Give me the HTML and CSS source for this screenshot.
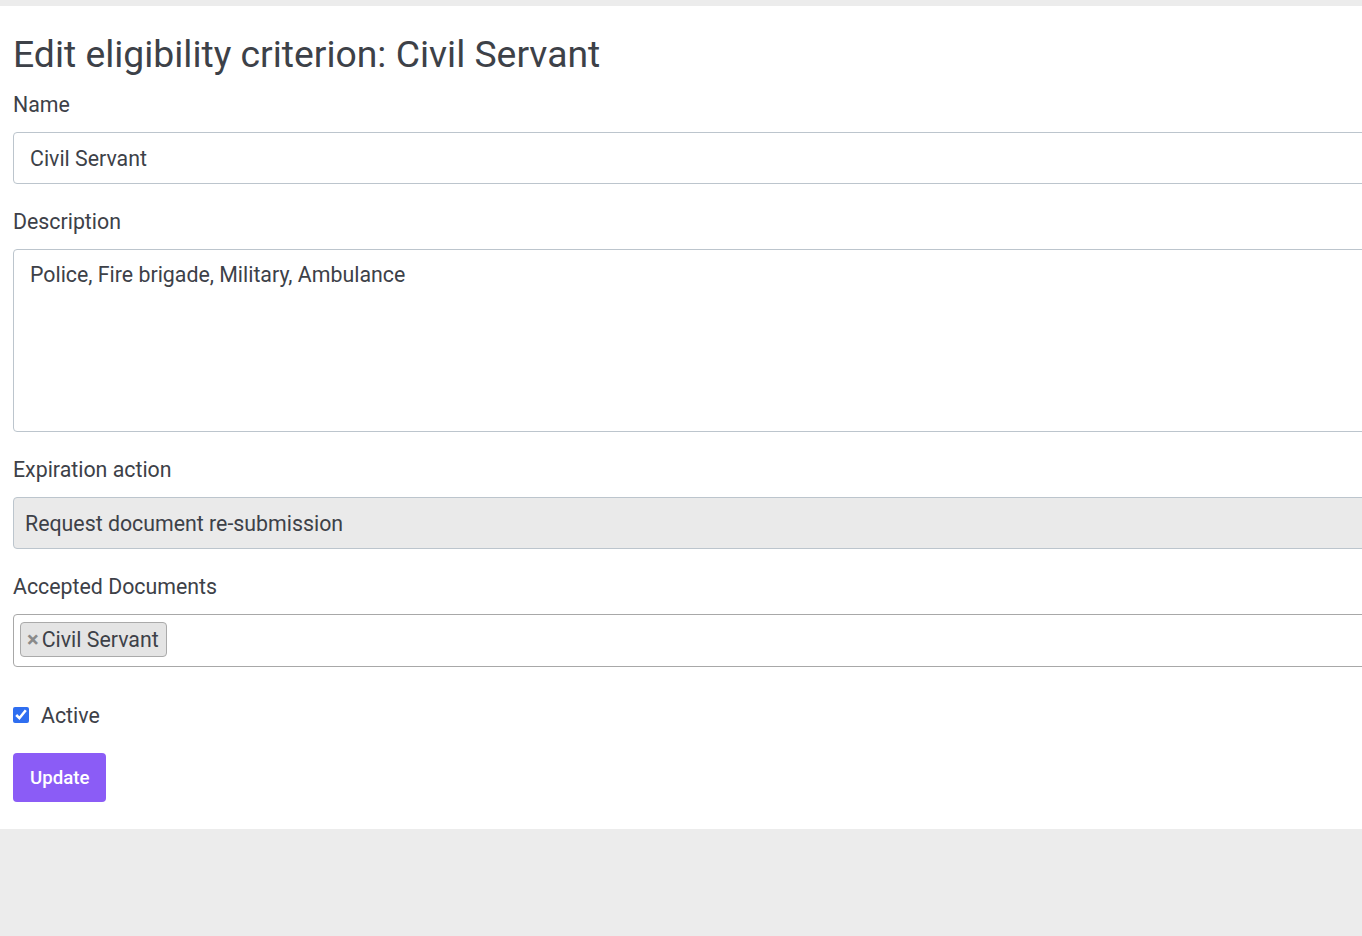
FILE: index.html
```html
<!DOCTYPE html>
<html lang="en">
<head>
<meta charset="utf-8">
<title>Edit eligibility criterion</title>
<link rel="stylesheet" href="styles.css">
</head>
<body>
<div class="panel">
  <h1 class="title">Edit eligibility criterion: Civil Servant</h1>
  <form class="form">
    <div class="field">
      <label class="label" for="name">Name</label>
      <input class="control" id="name" type="text" value="Civil Servant">
    </div>
    <div class="field">
      <label class="label" for="desc">Description</label>
      <textarea class="control textarea" id="desc">Police, Fire brigade, Military, Ambulance</textarea>
    </div>
    <div class="field">
      <label class="label" for="exp">Expiration action</label>
      <div class="control select" id="exp">Request document re-submission</div>
    </div>
    <div class="field">
      <label class="label">Accepted Documents</label>
      <div class="multi">
        <span class="tag"><span class="tag-x">×</span>Civil Servant</span>
      </div>
    </div>
    <div class="check-row">
      <input class="check" type="checkbox" id="active" checked>
      <label class="check-label" for="active">Active</label>
    </div>
    <button class="btn" type="button">Update</button>
  </form>
</div>
</body>
</html>
```
FILE: styles.css
```css
html, body {
  margin: 0;
  padding: 0;
  overflow: hidden;
}
body {
  background: #ececec;
  font-family: Roboto, "Liberation Sans", sans-serif;
  color: #3d4148;
  padding-top: 6px;
  height: 936px;
  box-sizing: border-box;
}
.panel {
  background: #ffffff;
  width: 1420px;
  padding: 24px 0 27px 13px;
  box-sizing: border-box;
}
.title {
  margin: 0 0 10px 0;
  font-size: 37.3px;
  font-weight: 400;
  line-height: 48px;
  color: #3d4148;
}
.form {
  display: flex;
  flex-direction: column;
}
.field {
  display: flex;
  flex-direction: column;
  margin-bottom: 21px;
}
.label {
  font-size: 21.33px;
  line-height: 32px;
  padding-top: 1px;
  margin-bottom: 11px;
  color: #3d4148;
}
.control {
  box-sizing: border-box;
  width: 100%;
  height: 52px;
  border: 1px solid #bcc5cd;
  border-radius: 4px;
  padding: 0 16px;
  font-family: inherit;
  font-size: 21.33px;
  color: #3d4148;
  background: #fff;
  outline: none;
}
.textarea {
  height: 183px;
  padding-top: 11px;
  resize: none;
  line-height: 28px;
}
.select {
  display: flex;
  align-items: center;
  background: #eaeaea;
  padding: 0 11px;
}
.multi {
  box-sizing: border-box;
  height: 53px;
  border: 1px solid #a8a8a8;
  border-radius: 4px;
  padding: 7px 6px;
  display: flex;
  align-items: flex-start;
}
.tag {
  display: inline-flex;
  align-items: center;
  height: 35px;
  box-sizing: border-box;
  background: #e4e4e4;
  border: 1px solid #aaaaaa;
  border-radius: 4px;
  padding: 0 7px 0 6px;
  font-size: 21.33px;
  color: #3d4148;
}
.tag-x {
  color: #8a8a8a;
  font-weight: 700;
  font-size: 22px;
  margin-right: 3px;
}
.check-row {
  display: flex;
  align-items: center;
  height: 32px;
  margin-top: 11px;
  margin-bottom: 22px;
}
.check {
  width: 16px;
  height: 16px;
  margin: 0 12px 0 0;
  accent-color: #2f6ef0;
}
.check-label {
  font-size: 21.33px;
  color: #3d4148;
}
.btn {
  align-self: flex-start;
  background: #8b5cf6;
  color: #fff;
  border: none;
  border-radius: 4px;
  height: 49px;
  padding: 0 17px;
  font-family: inherit;
  font-size: 18.67px;
  font-weight: 500;
}
```
